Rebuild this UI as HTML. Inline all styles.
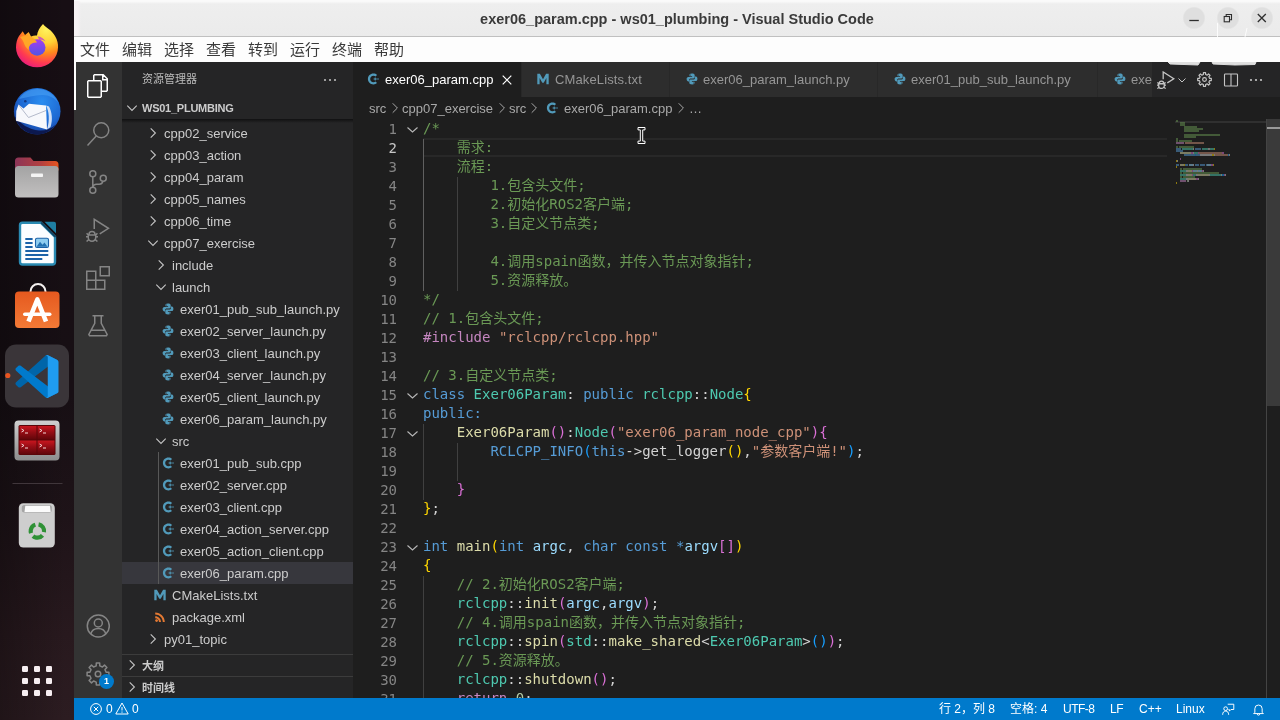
<!DOCTYPE html>
<html lang="zh-CN">
<head>
<meta charset="utf-8">
<title>exer06_param.cpp - ws01_plumbing - Visual Studio Code</title>
<style>
*{box-sizing:border-box;margin:0;padding:0}
html,body{width:1280px;height:720px;overflow:hidden;background:#1e1e1e}
body{position:relative;font-family:"Liberation Sans","Noto Sans CJK SC",sans-serif;font-size:13px;color:#ccc}
.abs{position:absolute}
#titlebar,#menubar,#sidebar,#editor,#status,#activity{will-change:transform}
/* dock */
#dock{left:0;top:0;width:74px;height:720px;background:linear-gradient(90deg,rgba(0,0,0,.28),rgba(0,0,0,0) 90%),linear-gradient(180deg,#170e14 0%,#170f14 55%,#1e1318 72%,#28191e 88%,#2c1c21 100%)}
/* title bar */
#titlebar{left:74px;top:0;width:1206px;height:37px;background:linear-gradient(90deg,#f7f3f5 0,#f5f1f3 4px,rgba(236,236,236,0) 7px),linear-gradient(180deg,#fbfbfb 0,#eeeeee 3px,#ebebeb 100%);border-top:1px solid #fafafa;border-bottom:1px solid #c0c0c0}
#title{left:0;top:0;width:1206px;height:37px;line-height:37px;text-align:center;color:#3a3a3a;font-weight:bold;font-size:14.5px}
#menubar{left:74px;top:37px;width:1206px;height:25px;background:#fdfdfd}
#menubar span{position:absolute;top:0;height:25px;line-height:25px;font-size:15px;color:#3a3a3a;white-space:nowrap}
/* vscode */
#activity{left:74px;top:62px;width:48px;height:636px;background:#333}
#sidebar{left:122px;top:62px;width:231px;height:636px;background:#252526}
#editor{left:353px;top:62px;width:927px;height:636px;background:#1e1e1e}
#status{left:74px;top:698px;width:1206px;height:22px;background:#007acc;color:#fff;font-size:12px}

/* editor */
#tabs{left:0;top:0;width:927px;height:35px;background:#252526}
.tab{position:absolute;top:0;height:35px;background:#2d2d2d;border-right:1px solid #282828;color:#969696;font-size:13px;line-height:35px;white-space:nowrap}
.tab.active{background:#1e1e1e;color:#fff}
.tab .lbl{position:absolute;top:0;left:32px}
#crumbs{left:0;top:35px;width:927px;height:22px;background:#1e1e1e;color:#a9a9a9;font-size:13px;line-height:22px;white-space:nowrap}
#crumbs span{position:absolute;top:1px}
#code{left:0;top:57px;width:927px;height:579px;overflow:hidden;font-family:"DejaVu Sans Mono","Noto Sans CJK SC",monospace;font-size:14px;line-height:19px;color:#d4d4d4}
.ln{position:relative;height:19px;padding-left:70px;white-space:pre}
.ln b{position:absolute;left:0;top:1px;width:44px;text-align:right;font-weight:normal;color:#858585}
.ln b.cur{color:#c6c6c6}
.ln i{font-style:normal}
.c{color:#6a9955}.k{color:#569cd6}.m{color:#c586c0}.s{color:#ce9178}.t{color:#4ec9b0}.f{color:#dcdcaa}.v{color:#9cdcfe}.n{color:#b5cea8}
.b1{color:#ffd700}.b2{color:#da70d6}.b3{color:#179fff}
.guide{position:absolute;width:1px;background:#404040}
.guide.act{background:#606060}
.fold{position:absolute;left:53px;width:12px;height:19px}
#curline{left:70px;top:19px;width:744px;height:19px;border-top:2px solid #282828;border-bottom:2px solid #282828}
#minimap{left:822px;top:57px;width:90px;height:579px}
#vscroll{left:913px;top:57px;width:14px;height:579px;border-left:1px solid #444}
#vslider{left:914px;top:57px;width:13px;height:287px;background:#3a3a3a}
#vmark{left:914px;top:65px;width:13px;height:2px;background:#9a9a9a}

/* sidebar */
#sbtitle{left:20px;top:0;height:35px;line-height:35px;font-size:11px;color:#bbb}
#sbmore{left:200px;top:10px;width:16px;height:16px}
#sbhead{left:0;top:35px;width:231px;height:22px;line-height:22px;font-weight:bold;font-size:11px;color:#ccc}
#sbhead .tt{position:absolute;left:20px;top:0;white-space:nowrap;letter-spacing:-.25px}
#sbshadow{left:0;top:57px;width:231px;height:4px;background:linear-gradient(180deg,rgba(0,0,0,.55),rgba(0,0,0,0))}
.row{position:absolute;left:0;width:231px;height:22px;line-height:22px;color:#ccc;font-size:13px;white-space:nowrap}
.row.sel{background:#37373d}
.row .ic{position:absolute;top:0;height:22px}
.row .nm{position:absolute;top:1px}
.tw{position:absolute;left:0;top:3px;width:16px;height:16px}
.fi{position:absolute;left:0;top:5px;width:12px;height:12px}
.sg{position:absolute;width:1px;background:#585858}
.pane{position:absolute;left:0;width:231px;height:22px;line-height:22px;border-top:1px solid #3c3c3c;font-weight:bold;font-size:11px;color:#ccc}
.pane .tt{position:absolute;left:20px;top:0}

/* activity bar */
#activity svg.ai{position:absolute;left:12px;width:24px;height:24px;fill:none;stroke:#858585;stroke-width:1.5}
#activity svg.ai.on{stroke:#fff}
#actind{left:0;top:0;width:2px;height:48px;background:#fff}
#badge{left:25px;top:612px;width:15px;height:15px;border-radius:8px;background:#007acc;color:#fff;font-size:9px;font-weight:bold;line-height:15px;text-align:center}

.tab .ti{position:absolute;left:14px;top:11px;width:12px;height:12px}
.tab .x{position:absolute;right:6px;top:10px;width:16px;height:16px}
#eactions{left:799px;top:0;width:128px;height:35px;background:#252526}
#crumbs svg.sep{position:absolute;top:3px;width:16px;height:16px}
#status span{position:absolute;top:0;height:22px;line-height:22px;white-space:nowrap}
#status svg{position:absolute}
.wbtn{position:absolute;top:5px;width:24px;height:24px;background:radial-gradient(circle,#dfdfdf 0,#dfdfdf 10px,rgba(223,223,223,0) 11.500px)}
</style>
</head>
<body>
<div id="dock" class="abs">
<svg class="abs" style="left:0;top:0" width="74" height="720" viewBox="0 0 74 720">
<defs>
<radialGradient id="ffg" cx="0.72" cy="0.12" r="1"><stop offset="0" stop-color="#fff45f"/><stop offset=".32" stop-color="#ffd034"/><stop offset=".55" stop-color="#ff8a1c"/><stop offset=".78" stop-color="#ff3b50"/><stop offset="1" stop-color="#e31587"/></radialGradient>
<linearGradient id="ffp" x1="0" y1="0" x2="0" y2="1"><stop offset="0" stop-color="#a63cf0"/><stop offset="1" stop-color="#4f55e3"/></linearGradient>
<radialGradient id="tbg" cx=".6" cy=".3" r=".85"><stop offset="0" stop-color="#2b8df0"/><stop offset=".55" stop-color="#1d68d2"/><stop offset="1" stop-color="#142a80"/></radialGradient>
<linearGradient id="fld" x1="0" x2="1"><stop offset="0" stop-color="#8c3558"/><stop offset=".6" stop-color="#b3403f"/><stop offset="1" stop-color="#e8551f"/></linearGradient>
<linearGradient id="fbody" x1="0" y1="0" x2="0" y2="1"><stop offset="0" stop-color="#a3a3a3"/><stop offset="1" stop-color="#c2c0c0"/></linearGradient>
<linearGradient id="sw" x1="0" y1="0" x2="0" y2="1"><stop offset="0" stop-color="#e5591f"/><stop offset="1" stop-color="#f37a36"/></linearGradient>
<linearGradient id="tm" x1="0" y1="0" x2="0" y2="1"><stop offset="0" stop-color="#cfcfcf"/><stop offset="1" stop-color="#8d8d8d"/></linearGradient>
<linearGradient id="tr" x1="0" y1="0" x2="0" y2="1"><stop offset="0" stop-color="#c9161f"/><stop offset=".45" stop-color="#960d15"/><stop offset="1" stop-color="#62060a"/></linearGradient>
</defs>
<!-- firefox -->
<g>
<path d="M43 24C46 28 52 30 55 36C57.500 40 58.200 44 58 47.500A21 19.800 0 0 1 16 47.500C16 43 17 39 19 36L22.700 31.300L25 35L28.700 32L31 36.500C33 35.500 35 35.200 37 35.500C37.500 31 40 27 43 24Z" fill="url(#ffg)"/>
<circle cx="37.200" cy="47.500" r="8.300" fill="url(#ffp)"/>
<path d="M20 37C24 35.500 29 35.500 32 37.500C34 38.800 36 40.500 37 42.500C34.500 42.300 32 43 30.500 44.500C29 46 28.500 48 28.800 50C26 48 24.500 45 23.500 42C22.500 40 21.500 38.500 20 37Z" fill="#ffa726"/>
<path d="M37.500 36.500C41 36.500 44 38.500 45.500 41.500C43.500 40 41 39.500 39 40C38.800 38.800 38.300 37.500 37.500 36.500Z" fill="#c23fd0" opacity=".8"/>
</g>
<!-- thunderbird -->
<g>
<circle cx="37.200" cy="111.200" r="23.300" fill="url(#tbg)"/>
<path d="M14.500 116C17 126 26 134.500 37.200 134.500C45 134.500 52 130.500 56 124.500C51 129 45 131 39 130.500C29 129.500 20 124 14.500 116Z" fill="#0a1040" opacity=".85"/>
<path d="M19 99C23 92.500 30 89 37.500 89C47 89 55 95 58.500 103C55 98 49 95 42.500 95C34 95 27 97.500 19 99Z" fill="#4aa3f5" opacity=".55"/>
<path d="M18.500 104.500L23.500 108.500L29 103.800L46 105.400L47 129.500L16 120.800L16.300 111Z" fill="#f7f8fc"/>
<path d="M18.800 105L28.500 117.500L46 110.500" fill="none" stroke="#b4bacb" stroke-width="1"/>
<path d="M46 105.400C49 111 50 120 47 129.500L50.500 127C53 120 52 112 49 106.500Z" fill="#cfdff6"/>
<circle cx="25.300" cy="101.300" r="1.300" fill="#143a86"/>
</g>
<!-- files -->
<g>
<path d="M15 161a3.500 3.500 0 0 1 3.500-3.500h12l3 3.500h21.500a3.500 3.500 0 0 1 3.500 3.500v6h-43.500z" fill="url(#fld)"/>
<rect x="15" y="166" width="43.500" height="31.500" rx="3.500" fill="url(#fbody)"/>
<rect x="31" y="173.500" width="12" height="3.500" rx=".8" fill="#f4f4f4"/>
</g>
<!-- writer -->
<g>
<path d="M22.500 222.800h18.500l14 14v25.200a2.500 2.500 0 0 1-2.500 2.500h-30a2.500 2.500 0 0 1-2.500-2.500v-36.700a2.500 2.500 0 0 1 2.500-2.500z" fill="#fbfdff" stroke="#2a8ab2" stroke-width="2.400"/>
<path d="M44.500 221.700h9.500a2 2 0 0 1 2 2v9.500z" fill="#1f7fa3"/>
<path d="M41 222.500l14.500 14.500" stroke="#0f3f5c" stroke-width="1.600"/>
<rect x="25.300" y="238" width="7.300" height="2" fill="#1b62a8"/><rect x="25.300" y="242" width="7.300" height="2" fill="#1b62a8"/><rect x="25.300" y="246" width="7.300" height="2" fill="#1b62a8"/>
<rect x="25.300" y="250" width="23" height="2" fill="#1b62a8"/><rect x="25.300" y="254" width="23" height="2" fill="#1b62a8"/><rect x="25.300" y="258" width="17" height="2" fill="#1b62a8"/>
<rect x="35.500" y="238.200" width="13" height="9.300" rx="1.500" fill="#8fcdf0" stroke="#1b62a8" stroke-width="1.100"/>
<path d="M36.500 246.800l3.500-5 2.500 3 2-2.200 3 4.200z" fill="#2472b2"/>
</g>
<!-- software -->
<g>
<path d="M30.500 292.500v-1a7.500 7.500 0 0 1 15 0v1" fill="none" stroke="#f3efee" stroke-width="2"/>
<rect x="15" y="291.500" width="44.500" height="36.500" rx="4" fill="url(#sw)"/>
<path d="M28.500 321.500 37.300 299.500 46 321.500" fill="none" stroke="#fff" stroke-width="4.600" stroke-linejoin="round"/>
<rect x="23" y="312.500" width="28.500" height="3.600" rx="1.800" fill="#fff"/>
</g>
<!-- vscode -->
<rect x="5" y="344.500" width="64" height="63" rx="11" fill="#3a3539"/>
<circle cx="7.800" cy="375.500" r="2.600" fill="#e95420"/>
<g transform="translate(15.500,355) scale(.43)">
<path d="M96.460 10.800 75.860.880C73.470-.270 70.620.210 68.750 2.080L1.300 63.580c-1.810 1.650-1.810 4.510 0 6.160l5.510 5.010c1.490 1.350 3.720 1.450 5.320.240L93.360 13.370c2.730-2.070 6.640-.120 6.640 3.300v-.240c0-2.400-1.380-4.590-3.540-5.630z" fill="#0065a9"/>
<path d="M96.460 89.200 75.860 99.120c-2.390 1.150-5.240.670-7.110-1.200L1.300 36.420c-1.810-1.650-1.810-4.510 0-6.160l5.510-5.010c1.490-1.350 3.720-1.450 5.320-.240L93.360 86.630c2.730 2.070 6.640.120 6.640-3.300v.240c0 2.400-1.380 4.590-3.540 5.630z" fill="#007acc"/>
<path d="M75.860 99.130c-2.390 1.150-5.240.660-7.110-1.210 2.310 2.310 6.250.670 6.250-2.590V4.670c0-3.260-3.940-4.890-6.250-2.590 1.870-1.870 4.720-2.360 7.110-1.210l20.600 9.910C98.620 11.820 100 14.010 100 16.410v67.180c0 2.400-1.380 4.590-3.540 5.630z" fill="#1f9cf0"/>
</g>
<!-- terminator -->
<g>
<rect x="14.500" y="420.500" width="45" height="40" rx="4" fill="url(#tm)"/>
<rect x="18.500" y="425" width="37" height="30" rx="1.500" fill="#5a0508"/>
<rect x="19.500" y="426" width="17" height="13.500" fill="url(#tr)"/><rect x="37.500" y="426" width="17" height="13.500" fill="url(#tr)"/>
<rect x="19.500" y="440.500" width="17" height="13.500" fill="url(#tr)"/><rect x="37.500" y="440.500" width="17" height="13.500" fill="url(#tr)"/>
<path d="M21.500 429l2.500 1.500-2.500 1.500M25 433h3M39.500 429l2.500 1.500-2.500 1.500M43 433h3M21.500 444l2.500 1.500-2.500 1.500M25 448h3M39.500 444l2.500 1.500-2.500 1.500M43 448h3" fill="none" stroke="#f3d6d6" stroke-width="1"/>
</g>
<rect x="12.500" y="483" width="50" height="1" fill="#40363b"/>
<!-- trash -->
<g>
<rect x="18.800" y="503.300" width="36" height="44.300" rx="4.500" fill="#cecece"/>
<rect x="21.800" y="505" width="30" height="7.500" rx="2.500" fill="#a4a4a4"/>
<path d="M24.500 512l.8-6.200h24.600l.8 6.200z" fill="#fbfbfb"/>
<circle cx="37.400" cy="531" r="6.700" fill="none" stroke="#2f9136" stroke-width="4.200" stroke-dasharray="10.500 3.530" transform="rotate(-80 37.400 531)"/>
</g>
<!-- grid -->
<g fill="#f6eef1">
<rect x="22" y="666" width="6" height="6" rx="1.200"/><rect x="34" y="666" width="6" height="6" rx="1.200"/><rect x="46" y="666" width="6" height="6" rx="1.200"/>
<rect x="22" y="678" width="6" height="6" rx="1.200"/><rect x="34" y="678" width="6" height="6" rx="1.200"/><rect x="46" y="678" width="6" height="6" rx="1.200"/>
<rect x="22" y="690" width="6" height="6" rx="1.200"/><rect x="34" y="690" width="6" height="6" rx="1.200"/><rect x="46" y="690" width="6" height="6" rx="1.200"/>
</g>
</svg>
</div>
<div id="titlebar" class="abs"><div id="title" class="abs">exer06_param.cpp - ws01_plumbing - Visual Studio Code</div>
<div class="wbtn" style="left:1108px"><svg width="24" height="24" viewBox="0 0 24 24"><path d="M7.300 14.500h9.500" stroke="#2e2e2e" stroke-width="1.300"/></svg></div>
<div class="wbtn" style="left:1142px"><svg width="24" height="24" viewBox="0 0 24 24" fill="none" stroke="#2e2e2e" stroke-width="1.100"><rect x="8.200" y="10.500" width="5.300" height="5.300"/><path d="M10.200 10.500v-2h5.300v5.300h-2"/></svg></div>
<div class="wbtn" style="left:1176px"><svg width="24" height="24" viewBox="0 0 24 24"><path d="M7.800 8 15.800 16M15.800 8 7.800 16" stroke="#2e2e2e" stroke-width="1.300"/></svg></div>
</div>
<div id="menubar" class="abs">
<span style="left:6px">文件</span><span style="left:48px">编辑</span><span style="left:90px">选择</span><span style="left:132px">查看</span><span style="left:174px">转到</span><span style="left:216px">运行</span><span style="left:258px">终端</span><span style="left:300px">帮助</span>
</div>
<div id="activity" class="abs">
<div id="actind" class="abs"></div>
<svg class="ai on" style="top:12px" viewBox="0 0 24 24"><path d="M7.750 6V1.500l.750-.750h8.700l4.050 4.050v11.700l-.750.750h-4.500M16.750 1v4.750h4.500M1.750 7.500l.750-.750h12l.750.750v15l-.750.750h-12l-.750-.750z"/></svg>
<svg class="ai" style="top:60px" viewBox="0 0 24 24"><circle cx="15.250" cy="8.250" r="7.500"/><path d="M10.200 13.900 1.500 23.400"/></svg>
<svg class="ai" style="top:108px" viewBox="0 0 24 24"><circle cx="6.800" cy="3.750" r="3"/><circle cx="6.800" cy="20.200" r="3"/><circle cx="17.250" cy="8.200" r="3"/><path d="M6.800 6.750v10.450M17 11.200c-.6 2-2 3-3.700 3h-2.800c-1.900 0-3.300 1.100-3.700 3"/></svg>
<svg class="ai" style="top:156px" viewBox="0 0 24 24"><path d="M8.250 11V1.300l14.200 9-8.700 5.500"/><path d="M2.250 17h7.500v2.500a3.750 3.750 0 0 1-7.500 0zM3 16.500a3 3 0 0 1 6 0M2.250 17 .6 15.200M9.750 17l1.650-1.800M0 18.750h2.250M9.750 18.750h2.250M2.700 21.500.6 23.500M9.300 21.500l2.100 2"/></svg>
<svg class="ai" style="top:204px" viewBox="0 0 24 24"><path d="M.750 5.250h9v9h9v9h-18zM.750 14.250h9v9M14.250.750h9v9h-9z"/></svg>
<svg class="ai" style="top:252px" viewBox="0 0 24 24"><path d="M6.500 1.750h11M8.750 1.750v7.500l-5.900 11.200.7 1.300h16.900l.7-1.300-5.900-11.200v-7.500M5.500 16.250h13"/></svg>
<svg class="ai" style="top:552px" viewBox="0 0 24 24"><circle cx="12.300" cy="12" r="11"/><circle cx="12.300" cy="9" r="4"/><path d="M4.800 20c1-4 4-5.500 7.500-5.500s6.500 1.500 7.500 5.500"/></svg>
<svg class="ai" style="top:600px" viewBox="0 0 24 24"><path d="M10.3 1.1 L13.7 1.1 L13.8 3.9 L16.4 5.0 L18.5 3.1 L20.9 5.5 L19.0 7.6 L20.1 10.2 L22.9 10.3 L22.9 13.7 L20.1 13.8 L19.0 16.4 L20.9 18.5 L18.5 20.9 L16.4 19.0 L13.8 20.1 L13.7 22.9 L10.3 22.9 L10.2 20.1 L7.6 19.0 L5.5 20.9 L3.1 18.5 L5.0 16.4 L3.9 13.8 L1.1 13.7 L1.1 10.3 L3.9 10.2 L5.0 7.6 L3.1 5.5 L5.5 3.1 L7.6 5.0 L10.2 3.9Z" stroke-linejoin="round"/><circle cx="12" cy="12" r="2.750"/></svg>
<div id="badge" class="abs">1</div>
</div>
<div id="sidebar" class="abs">
<svg width="0" height="0" style="position:absolute"><defs>
<g id="ipy"><path d="M5.9.6c-2.2 0-2.4.9-2.4 1.7v1h2.6v.6H2.3C1.200 3.900.6 4.900.6 6.100s.5 2.300 1.500 2.300h1v-1.300c0-1 .8-1.700 1.700-1.700h2.500c.8 0 1.400-.6 1.400-1.400V2.300C8.700 1.200 7.700.6 5.900.6zM4.600 1.500a.5.5 0 1 1 0 1 .5.500 0 0 1 0-1z" fill="#519aba"/><path d="M6.100 11.400c2.200 0 2.400-.9 2.400-1.700v-1H5.900v-.6h3.800c1.100 0 1.700-1 1.700-2.200s-.5-2.300-1.500-2.300h-1v1.300c0 1-.8 1.700-1.700 1.700H4.700c-.8 0-1.400.6-1.400 1.400v1.700c0 1.100 1 1.700 2.800 1.700zM7.400 10.500a.5.500 0 1 1 0-1 .5.500 0 0 1 0 1z" fill="#519aba"/></g>
<g id="icpp"><path d="M6.400.6C3.300.6.900 3 .900 6s2.400 5.400 5.500 5.400c1.500 0 2.700-.5 3.600-1.300L8.600 8.500c-.6.500-1.300.8-2.200.8C4.500 9.300 3.200 7.800 3.200 6s1.300-3.300 3.200-3.300c.9 0 1.600.3 2.200.8L10 1.900C9.100 1.100 7.900.6 6.400.6z" fill="#519aba"/><path d="M6.600 5.500h1.100V4.400h1v1.100h1.100v1H8.700v1.100h-1V6.500H6.600zM10.200 5.500h1.600v1h-1.600z" fill="#519aba"/></g>
<g id="icm"><path d="M.3.800h2.600L6 6.300 9.100.800h2.600v10.400H9.400V5L6.700 9.700H5.300L2.600 5v6.200H.3z" fill="#519aba"/></g>
<g id="ixml"><circle cx="2.600" cy="9.600" r="1.400" fill="#e37933"/><path d="M1.200 5.200c3.200 0 5.800 2.600 5.800 5.800H5C5 8.900 3.300 7.200 1.200 7.200z" fill="#e37933"/><path d="M1.200 1.400c5.300 0 9.600 4.300 9.600 9.600H8.800c0-4.200-3.400-7.600-7.600-7.600z" fill="#e37933"/></g>
</defs></svg>
<div id="sbtitle" class="abs">资源管理器</div>
<svg id="sbmore" class="abs" viewBox="0 0 16 16"><circle cx="3" cy="8" r="1" fill="#c5c5c5"/><circle cx="8" cy="8" r="1" fill="#c5c5c5"/><circle cx="13" cy="8" r="1" fill="#c5c5c5"/></svg>
<div id="sbhead" class="abs"><svg class="abs" style="left:2px;top:3px;width:16px;height:16px" viewBox="0 0 16 16"><path d="M3.300 5.700 8 10.400 12.700 5.700" fill="none" stroke="#c5c5c5" stroke-width="1.100"/></svg><span class="tt">WS01_PLUMBING</span></div>
<div class="row" style="top:60px"><span class="ic" style="left:23px"><svg class="tw" viewBox="0 0 16 16"><path d="M5.7 3.3 10.4 8 5.7 12.7" fill="none" stroke="#c5c5c5" stroke-width="1.1"/></svg></span><span class="nm" style="left:42px">cpp02_service</span></div>
<div class="row" style="top:82px"><span class="ic" style="left:23px"><svg class="tw" viewBox="0 0 16 16"><path d="M5.7 3.3 10.4 8 5.7 12.7" fill="none" stroke="#c5c5c5" stroke-width="1.1"/></svg></span><span class="nm" style="left:42px">cpp03_action</span></div>
<div class="row" style="top:104px"><span class="ic" style="left:23px"><svg class="tw" viewBox="0 0 16 16"><path d="M5.7 3.3 10.4 8 5.7 12.7" fill="none" stroke="#c5c5c5" stroke-width="1.1"/></svg></span><span class="nm" style="left:42px">cpp04_param</span></div>
<div class="row" style="top:126px"><span class="ic" style="left:23px"><svg class="tw" viewBox="0 0 16 16"><path d="M5.7 3.3 10.4 8 5.7 12.7" fill="none" stroke="#c5c5c5" stroke-width="1.1"/></svg></span><span class="nm" style="left:42px">cpp05_names</span></div>
<div class="row" style="top:148px"><span class="ic" style="left:23px"><svg class="tw" viewBox="0 0 16 16"><path d="M5.7 3.3 10.4 8 5.7 12.7" fill="none" stroke="#c5c5c5" stroke-width="1.1"/></svg></span><span class="nm" style="left:42px">cpp06_time</span></div>
<div class="row" style="top:170px"><span class="ic" style="left:23px"><svg class="tw" viewBox="0 0 16 16"><path d="M3.3 5.7 8 10.4 12.7 5.7" fill="none" stroke="#c5c5c5" stroke-width="1.1"/></svg></span><span class="nm" style="left:42px">cpp07_exercise</span></div>
<div class="row" style="top:192px"><span class="ic" style="left:31px"><svg class="tw" viewBox="0 0 16 16"><path d="M5.7 3.3 10.4 8 5.7 12.7" fill="none" stroke="#c5c5c5" stroke-width="1.1"/></svg></span><span class="nm" style="left:50px">include</span></div>
<div class="row" style="top:214px"><span class="ic" style="left:31px"><svg class="tw" viewBox="0 0 16 16"><path d="M3.3 5.7 8 10.4 12.7 5.7" fill="none" stroke="#c5c5c5" stroke-width="1.1"/></svg></span><span class="nm" style="left:50px">launch</span></div>
<div class="row" style="top:236px"><span class="ic" style="left:40px"><svg class="fi" viewBox="0 0 12 12"><use href="#ipy"/></svg></span><span class="nm" style="left:58px">exer01_pub_sub_launch.py</span></div>
<div class="row" style="top:258px"><span class="ic" style="left:40px"><svg class="fi" viewBox="0 0 12 12"><use href="#ipy"/></svg></span><span class="nm" style="left:58px">exer02_server_launch.py</span></div>
<div class="row" style="top:280px"><span class="ic" style="left:40px"><svg class="fi" viewBox="0 0 12 12"><use href="#ipy"/></svg></span><span class="nm" style="left:58px">exer03_client_launch.py</span></div>
<div class="row" style="top:302px"><span class="ic" style="left:40px"><svg class="fi" viewBox="0 0 12 12"><use href="#ipy"/></svg></span><span class="nm" style="left:58px">exer04_server_launch.py</span></div>
<div class="row" style="top:324px"><span class="ic" style="left:40px"><svg class="fi" viewBox="0 0 12 12"><use href="#ipy"/></svg></span><span class="nm" style="left:58px">exer05_client_launch.py</span></div>
<div class="row" style="top:346px"><span class="ic" style="left:40px"><svg class="fi" viewBox="0 0 12 12"><use href="#ipy"/></svg></span><span class="nm" style="left:58px">exer06_param_launch.py</span></div>
<div class="row" style="top:368px"><span class="ic" style="left:31px"><svg class="tw" viewBox="0 0 16 16"><path d="M3.3 5.7 8 10.4 12.7 5.7" fill="none" stroke="#c5c5c5" stroke-width="1.1"/></svg></span><span class="nm" style="left:50px">src</span></div>
<div class="row" style="top:390px"><span class="ic" style="left:40px"><svg class="fi" viewBox="0 0 12 12"><use href="#icpp"/></svg></span><span class="nm" style="left:58px">exer01_pub_sub.cpp</span></div>
<div class="row" style="top:412px"><span class="ic" style="left:40px"><svg class="fi" viewBox="0 0 12 12"><use href="#icpp"/></svg></span><span class="nm" style="left:58px">exer02_server.cpp</span></div>
<div class="row" style="top:434px"><span class="ic" style="left:40px"><svg class="fi" viewBox="0 0 12 12"><use href="#icpp"/></svg></span><span class="nm" style="left:58px">exer03_client.cpp</span></div>
<div class="row" style="top:456px"><span class="ic" style="left:40px"><svg class="fi" viewBox="0 0 12 12"><use href="#icpp"/></svg></span><span class="nm" style="left:58px">exer04_action_server.cpp</span></div>
<div class="row" style="top:478px"><span class="ic" style="left:40px"><svg class="fi" viewBox="0 0 12 12"><use href="#icpp"/></svg></span><span class="nm" style="left:58px">exer05_action_client.cpp</span></div>
<div class="row sel" style="top:500px"><span class="ic" style="left:40px"><svg class="fi" viewBox="0 0 12 12"><use href="#icpp"/></svg></span><span class="nm" style="left:58px">exer06_param.cpp</span></div>
<div class="row" style="top:522px"><span class="ic" style="left:32px"><svg class="fi" viewBox="0 0 12 12"><use href="#icm"/></svg></span><span class="nm" style="left:50px">CMakeLists.txt</span></div>
<div class="row" style="top:544px"><span class="ic" style="left:32px"><svg class="fi" viewBox="0 0 12 12"><use href="#ixml"/></svg></span><span class="nm" style="left:50px">package.xml</span></div>
<div class="row" style="top:566px"><span class="ic" style="left:23px"><svg class="tw" viewBox="0 0 16 16"><path d="M5.7 3.3 10.4 8 5.7 12.7" fill="none" stroke="#c5c5c5" stroke-width="1.1"/></svg></span><span class="nm" style="left:42px">py01_topic</span></div>

<div class="sg" style="left:36px;top:390px;height:132px"></div>
<div id="sbshadow" class="abs"></div>
<div class="pane" style="top:592px"><svg class="abs" style="left:2px;top:2px;width:16px;height:16px" viewBox="0 0 16 16"><path d="M5.700 3.300 10.400 8 5.700 12.700" fill="none" stroke="#c5c5c5" stroke-width="1.100"/></svg><span class="tt">大纲</span></div>
<div class="pane" style="top:614px"><svg class="abs" style="left:2px;top:2px;width:16px;height:16px" viewBox="0 0 16 16"><path d="M5.700 3.300 10.400 8 5.700 12.700" fill="none" stroke="#c5c5c5" stroke-width="1.100"/></svg><span class="tt">时间线</span></div>
</div>
<div id="editor" class="abs">
<div id="tabs" class="abs">
<div class="tab active" style="left:0;width:169px"><svg class="ti" viewBox="0 0 12 12"><use href="#icpp"/></svg><span class="lbl">exer06_param.cpp</span><svg class="x" viewBox="0 0 16 16"><path d="M3.700 3.700 12.300 12.300M12.300 3.700 3.700 12.300" stroke="#fff" stroke-width="1.200" fill="none"/></svg></div>
<div class="tab" style="left:169px;width:148px"><svg class="ti" style="left:15px" viewBox="0 0 12 12"><use href="#icm"/></svg><span class="lbl" style="left:33px;letter-spacing:.12px">CMakeLists.txt</span></div>
<div class="tab" style="left:317px;width:208px"><svg class="ti" style="left:16px" viewBox="0 0 12 12"><use href="#ipy"/></svg><span class="lbl" style="left:33px">exer06_param_launch.py</span></div>
<div class="tab" style="left:525px;width:220px"><svg class="ti" style="left:16px" viewBox="0 0 12 12"><use href="#ipy"/></svg><span class="lbl" style="left:33px">exer01_pub_sub_launch.py</span></div>
<div class="tab" style="left:745px;width:60px;overflow:hidden"><svg class="ti" style="left:16px" viewBox="0 0 12 12"><use href="#ipy"/></svg><span class="lbl" style="left:33px">exer02_server_launch.py</span></div>
<div id="eactions" class="abs">
<svg class="abs" style="left:5px;top:9px;width:18px;height:18px" viewBox="0 0 24 24" fill="none" stroke="#c5c5c5" stroke-width="1.700"><path d="M8.250 11V1.300l14.200 9-8.700 5.500"/><path d="M2.250 17h7.500v2.500a3.750 3.750 0 0 1-7.500 0zM3 16.500a3 3 0 0 1 6 0M2.250 17 .6 15.200M9.750 17l1.650-1.800M0 18.750h2.250M9.750 18.750h2.250M2.700 21.500.6 23.500M9.300 21.500l2.100 2"/></svg>
<svg class="abs" style="left:25px;top:13px;width:10px;height:10px" viewBox="0 0 10 10"><path d="M1.500 3.500 5 7 8.500 3.500" fill="none" stroke="#c5c5c5" stroke-width="1"/></svg>
<svg class="abs" style="left:45px;top:10px;width:15px;height:15px" viewBox="0 0 24 24" fill="none" stroke="#c5c5c5" stroke-width="1.900"><path d="M10.3 1.1 L13.7 1.1 L13.8 3.9 L16.4 5.0 L18.5 3.1 L20.9 5.5 L19.0 7.6 L20.1 10.2 L22.9 10.3 L22.9 13.7 L20.1 13.8 L19.0 16.4 L20.9 18.5 L18.5 20.9 L16.4 19.0 L13.8 20.1 L13.7 22.9 L10.3 22.9 L10.2 20.1 L7.6 19.0 L5.5 20.9 L3.1 18.5 L5.0 16.4 L3.9 13.8 L1.1 13.7 L1.1 10.3 L3.9 10.2 L5.0 7.6 L3.1 5.5 L5.5 3.1 L7.6 5.0 L10.2 3.9Z" stroke-linejoin="round"/><circle cx="12" cy="12" r="3"/></svg>
<svg class="abs" style="left:71px;top:10px;width:16px;height:16px" viewBox="0 0 16 16" fill="none" stroke="#c5c5c5" stroke-width="1.100"><rect x="1.500" y="2" width="13" height="12" rx=".8"/><path d="M8 2v12"/></svg>
<svg class="abs" style="left:96px;top:10px;width:16px;height:16px" viewBox="0 0 16 16"><circle cx="3" cy="8" r="1.100" fill="#c5c5c5"/><circle cx="8" cy="8" r="1.100" fill="#c5c5c5"/><circle cx="13" cy="8" r="1.100" fill="#c5c5c5"/></svg>
</div>
</div>
<div id="crumbs" class="abs"><span style="left:16px">src</span><svg class="sep" style="left:34px" viewBox="0 0 16 16"><path d="M5.700 3.300 10.400 8 5.700 12.700" fill="none" stroke="#a9a9a9" stroke-width="1"/></svg><span style="left:49px">cpp07_exercise</span><svg class="sep" style="left:141px" viewBox="0 0 16 16"><path d="M5.700 3.300 10.400 8 5.700 12.700" fill="none" stroke="#a9a9a9" stroke-width="1"/></svg><span style="left:156px">src</span><svg class="sep" style="left:173px" viewBox="0 0 16 16"><path d="M5.700 3.300 10.400 8 5.700 12.700" fill="none" stroke="#a9a9a9" stroke-width="1"/></svg><svg class="abs" style="left:193px;top:5px;width:12px;height:12px" viewBox="0 0 12 12"><use href="#icpp"/></svg><span style="left:211px">exer06_param.cpp</span><svg class="sep" style="left:320px" viewBox="0 0 16 16"><path d="M5.700 3.300 10.400 8 5.700 12.700" fill="none" stroke="#a9a9a9" stroke-width="1"/></svg><span style="left:336px">…</span></div>
<div id="code" class="abs">
<div id="curline" class="abs"></div>
<div class="guide act" style="left:70px;top:20px;height:152px"></div>
<div class="guide" style="left:104px;top:58px;height:114px"></div>
<div class="guide" style="left:70px;top:305px;height:76px"></div>
<div class="guide" style="left:104px;top:324px;height:38px"></div>
<div class="guide" style="left:70px;top:457px;height:140px"></div>
<svg class="fold" style="top:1px" viewBox="0 0 12 19"><path d="M1.500 7.500 6.500 12 11.500 7.500" fill="none" stroke="#b8b8b8" stroke-width="1.100"/></svg><svg class="fold" style="top:267px" viewBox="0 0 12 19"><path d="M1.500 7.500 6.500 12 11.500 7.500" fill="none" stroke="#b8b8b8" stroke-width="1.100"/></svg><svg class="fold" style="top:305px" viewBox="0 0 12 19"><path d="M1.500 7.500 6.500 12 11.500 7.500" fill="none" stroke="#b8b8b8" stroke-width="1.100"/></svg><svg class="fold" style="top:419px" viewBox="0 0 12 19"><path d="M1.500 7.500 6.500 12 11.500 7.500" fill="none" stroke="#b8b8b8" stroke-width="1.100"/></svg>
<div class="ln"><b>1</b><i class="c">/*</i></div>
<div class="ln"><b class="cur">2</b><i class="c">    需求:</i></div>
<div class="ln"><b>3</b><i class="c">    流程:</i></div>
<div class="ln"><b>4</b><i class="c">        1.包含头文件;</i></div>
<div class="ln"><b>5</b><i class="c">        2.初始化ROS2客户端;</i></div>
<div class="ln"><b>6</b><i class="c">        3.自定义节点类;</i></div>
<div class="ln"><b>7</b></div>
<div class="ln"><b>8</b><i class="c">        4.调用spain函数，并传入节点对象指针;</i></div>
<div class="ln"><b>9</b><i class="c">        5.资源释放。</i></div>
<div class="ln"><b>10</b><i class="c">*/</i></div>
<div class="ln"><b>11</b><i class="c">// 1.包含头文件;</i></div>
<div class="ln"><b>12</b><i class="m">#include</i> <i class="s">"rclcpp/rclcpp.hpp"</i></div>
<div class="ln"><b>13</b></div>
<div class="ln"><b>14</b><i class="c">// 3.自定义节点类;</i></div>
<div class="ln"><b>15</b><i class="k">class</i> <i class="t">Exer06Param</i>: <i class="k">public</i> <i class="t">rclcpp</i>::<i class="t">Node</i><i class="b1">{</i></div>
<div class="ln"><b>16</b><i class="k">public:</i></div>
<div class="ln"><b>17</b>    <i class="f">Exer06Param</i><i class="b2">()</i>:<i class="t">Node</i><i class="b2">(</i><i class="s">"exer06_param_node_cpp"</i><i class="b2">){</i></div>
<div class="ln"><b>18</b>        <i class="k">RCLCPP_INFO</i><i class="b3">(</i><i class="k">this</i>-&gt;get_logger<i class="b1">()</i>,<i class="s">"参数客户端!"</i><i class="b3">)</i>;</div>
<div class="ln"><b>19</b></div>
<div class="ln"><b>20</b>    <i class="b2">}</i></div>
<div class="ln"><b>21</b><i class="b1">}</i>;</div>
<div class="ln"><b>22</b></div>
<div class="ln"><b>23</b><i class="k">int</i> <i class="f">main</i><i class="b1">(</i><i class="k">int</i> <i class="v">argc</i>, <i class="k">char</i> <i class="k">const</i> <i class="k">*</i><i class="v">argv</i><i class="b2">[]</i><i class="b1">)</i></div>
<div class="ln"><b>24</b><i class="b1">{</i></div>
<div class="ln"><b>25</b>    <i class="c">// 2.初始化ROS2客户端;</i></div>
<div class="ln"><b>26</b>    <i class="t">rclcpp</i>::<i class="f">init</i><i class="b2">(</i><i class="v">argc</i>,<i class="v">argv</i><i class="b2">)</i>;</div>
<div class="ln"><b>27</b>    <i class="c">// 4.调用spain函数，并传入节点对象指针;</i></div>
<div class="ln"><b>28</b>    <i class="t">rclcpp</i>::<i class="f">spin</i><i class="b2">(</i><i class="t">std</i>::<i class="f">make_shared</i>&lt;<i class="t">Exer06Param</i>&gt;<i class="b3">()</i><i class="b2">)</i>;</div>
<div class="ln"><b>29</b>    <i class="c">// 5.资源释放。</i></div>
<div class="ln"><b>30</b>    <i class="t">rclcpp</i>::<i class="f">shutdown</i><i class="b2">()</i>;</div>
<div class="ln"><b>31</b>    <i class="m">return</i> <i class="n">0</i>;</div>

</div>
<div id="minimap" class="abs"><div class="abs" style="left:0;top:2px;width:91px;height:2px;background:#303030"></div><svg class="abs" style="left:1px;top:0" width="90" height="70" viewBox="0 0 90 70" opacity=".7"><rect x="0" y="1.3" width="2" height="1.400" fill="#6a9955"/><rect x="4" y="3.3" width="5" height="1.400" fill="#6a9955"/><rect x="4" y="5.3" width="5" height="1.400" fill="#6a9955"/><rect x="8" y="7.3" width="13" height="1.400" fill="#6a9955"/><rect x="8" y="9.3" width="19" height="1.400" fill="#6a9955"/><rect x="8" y="11.3" width="15" height="1.400" fill="#6a9955"/><rect x="8" y="15.3" width="36" height="1.400" fill="#6a9955"/><rect x="8" y="17.3" width="12" height="1.400" fill="#6a9955"/><rect x="0" y="19.3" width="2" height="1.400" fill="#6a9955"/><rect x="0" y="21.3" width="2" height="1.400" fill="#6a9955"/><rect x="3" y="21.3" width="13" height="1.400" fill="#6a9955"/><rect x="0" y="23.3" width="8" height="1.400" fill="#c586c0"/><rect x="9" y="23.3" width="19" height="1.400" fill="#ce9178"/><rect x="0" y="27.3" width="2" height="1.400" fill="#6a9955"/><rect x="3" y="27.3" width="15" height="1.400" fill="#6a9955"/><rect x="0" y="29.3" width="5" height="1.400" fill="#569cd6"/><rect x="6" y="29.3" width="11" height="1.400" fill="#4ec9b0"/><rect x="17" y="29.3" width="1" height="1.400" fill="#d4d4d4"/><rect x="19" y="29.3" width="6" height="1.400" fill="#569cd6"/><rect x="26" y="29.3" width="6" height="1.400" fill="#4ec9b0"/><rect x="32" y="29.3" width="2" height="1.400" fill="#d4d4d4"/><rect x="34" y="29.3" width="4" height="1.400" fill="#4ec9b0"/><rect x="38" y="29.3" width="1" height="1.400" fill="#ffd700"/><rect x="0" y="31.3" width="7" height="1.400" fill="#569cd6"/><rect x="4" y="33.3" width="11" height="1.400" fill="#dcdcaa"/><rect x="15" y="33.3" width="2" height="1.400" fill="#da70d6"/><rect x="17" y="33.3" width="1" height="1.400" fill="#d4d4d4"/><rect x="18" y="33.3" width="4" height="1.400" fill="#4ec9b0"/><rect x="22" y="33.3" width="1" height="1.400" fill="#da70d6"/><rect x="23" y="33.3" width="23" height="1.400" fill="#ce9178"/><rect x="46" y="33.3" width="2" height="1.400" fill="#da70d6"/><rect x="8" y="35.3" width="11" height="1.400" fill="#569cd6"/><rect x="19" y="35.3" width="1" height="1.400" fill="#179fff"/><rect x="20" y="35.3" width="4" height="1.400" fill="#569cd6"/><rect x="24" y="35.3" width="12" height="1.400" fill="#d4d4d4"/><rect x="36" y="35.3" width="2" height="1.400" fill="#ffd700"/><rect x="38" y="35.3" width="1" height="1.400" fill="#d4d4d4"/><rect x="39" y="35.3" width="13" height="1.400" fill="#ce9178"/><rect x="52" y="35.3" width="1" height="1.400" fill="#179fff"/><rect x="53" y="35.3" width="1" height="1.400" fill="#d4d4d4"/><rect x="4" y="39.3" width="1" height="1.400" fill="#da70d6"/><rect x="0" y="41.3" width="1" height="1.400" fill="#ffd700"/><rect x="1" y="41.3" width="1" height="1.400" fill="#d4d4d4"/><rect x="0" y="45.3" width="3" height="1.400" fill="#569cd6"/><rect x="4" y="45.3" width="4" height="1.400" fill="#dcdcaa"/><rect x="8" y="45.3" width="1" height="1.400" fill="#ffd700"/><rect x="9" y="45.3" width="3" height="1.400" fill="#569cd6"/><rect x="13" y="45.3" width="4" height="1.400" fill="#9cdcfe"/><rect x="17" y="45.3" width="1" height="1.400" fill="#d4d4d4"/><rect x="19" y="45.3" width="4" height="1.400" fill="#569cd6"/><rect x="24" y="45.3" width="5" height="1.400" fill="#569cd6"/><rect x="30" y="45.3" width="1" height="1.400" fill="#569cd6"/><rect x="31" y="45.3" width="4" height="1.400" fill="#9cdcfe"/><rect x="35" y="45.3" width="2" height="1.400" fill="#da70d6"/><rect x="37" y="45.3" width="1" height="1.400" fill="#ffd700"/><rect x="0" y="47.3" width="1" height="1.400" fill="#ffd700"/><rect x="4" y="49.3" width="2" height="1.400" fill="#6a9955"/><rect x="7" y="49.3" width="19" height="1.400" fill="#6a9955"/><rect x="4" y="51.3" width="6" height="1.400" fill="#4ec9b0"/><rect x="10" y="51.3" width="2" height="1.400" fill="#d4d4d4"/><rect x="12" y="51.3" width="4" height="1.400" fill="#dcdcaa"/><rect x="16" y="51.3" width="1" height="1.400" fill="#da70d6"/><rect x="17" y="51.3" width="4" height="1.400" fill="#9cdcfe"/><rect x="21" y="51.3" width="1" height="1.400" fill="#d4d4d4"/><rect x="22" y="51.3" width="4" height="1.400" fill="#9cdcfe"/><rect x="26" y="51.3" width="1" height="1.400" fill="#da70d6"/><rect x="27" y="51.3" width="1" height="1.400" fill="#d4d4d4"/><rect x="4" y="53.3" width="2" height="1.400" fill="#6a9955"/><rect x="7" y="53.3" width="36" height="1.400" fill="#6a9955"/><rect x="4" y="55.3" width="6" height="1.400" fill="#4ec9b0"/><rect x="10" y="55.3" width="2" height="1.400" fill="#d4d4d4"/><rect x="12" y="55.3" width="4" height="1.400" fill="#dcdcaa"/><rect x="16" y="55.3" width="1" height="1.400" fill="#da70d6"/><rect x="17" y="55.3" width="3" height="1.400" fill="#4ec9b0"/><rect x="20" y="55.3" width="2" height="1.400" fill="#d4d4d4"/><rect x="22" y="55.3" width="11" height="1.400" fill="#dcdcaa"/><rect x="33" y="55.3" width="1" height="1.400" fill="#d4d4d4"/><rect x="34" y="55.3" width="11" height="1.400" fill="#4ec9b0"/><rect x="45" y="55.3" width="1" height="1.400" fill="#d4d4d4"/><rect x="46" y="55.3" width="2" height="1.400" fill="#179fff"/><rect x="48" y="55.3" width="1" height="1.400" fill="#da70d6"/><rect x="49" y="55.3" width="1" height="1.400" fill="#d4d4d4"/><rect x="4" y="57.3" width="2" height="1.400" fill="#6a9955"/><rect x="7" y="57.3" width="12" height="1.400" fill="#6a9955"/><rect x="4" y="59.3" width="6" height="1.400" fill="#4ec9b0"/><rect x="10" y="59.3" width="2" height="1.400" fill="#d4d4d4"/><rect x="12" y="59.3" width="8" height="1.400" fill="#dcdcaa"/><rect x="20" y="59.3" width="2" height="1.400" fill="#da70d6"/><rect x="22" y="59.3" width="1" height="1.400" fill="#d4d4d4"/><rect x="4" y="61.3" width="6" height="1.400" fill="#c586c0"/><rect x="11" y="61.3" width="1" height="1.400" fill="#b5cea8"/><rect x="12" y="61.3" width="1" height="1.400" fill="#d4d4d4"/><rect x="0" y="63.3" width="1" height="1.400" fill="#ffd700"/></svg></div>
<div id="vscroll" class="abs"></div>
<div id="vslider" class="abs"></div>
<div id="vmark" class="abs"></div>
</div>
<div id="status" class="abs">
<svg style="left:16px;top:5px;width:12px;height:12px" viewBox="0 0 12 12" fill="none" stroke="#fff" stroke-width="1"><circle cx="6" cy="6" r="5.400"/><path d="M3.800 3.800 8.200 8.200M8.200 3.800 3.800 8.200"/></svg>
<span style="left:32px">0</span>
<svg style="left:41px;top:4px;width:14px;height:13px" viewBox="0 0 14 13" fill="none" stroke="#fff" stroke-width="1"><path d="M7 1 13.200 12H.8z" stroke-linejoin="round"/><path d="M7 5v3.500M7 9.500v1.200"/></svg>
<span style="left:58px">0</span>
<span style="left:865px">行 2，列 8</span>
<span style="left:936px">空格: 4</span>
<span style="left:989px;letter-spacing:-.5px">UTF-8</span>
<span style="left:1036px;letter-spacing:-.5px">LF</span>
<span style="left:1065px">C++</span>
<span style="left:1102px">Linux</span>
<svg style="left:1148px;top:5px;width:13px;height:13px" viewBox="0 0 16 16" fill="none" stroke="#fff" stroke-width="1.200"><path d="M7 1.500h7.500v6.500h-3.500l-2 2v-2h-1"/><circle cx="4.500" cy="7" r="2.300"/><path d="M.8 14.500c0-3 1.500-4.500 3.700-4.500s3.700 1.500 3.700 4.500"/></svg>
<svg style="left:1178px;top:5px;width:13px;height:13px" viewBox="0 0 16 16" fill="none" stroke="#fff" stroke-width="1.200"><path d="M3.500 11.500V7a4.500 4.500 0 0 1 9 0v4.500l1.500 1.500h-12zM6.500 13.500a1.500 1.500 0 0 0 3 0"/></svg>
</div>
<svg class="abs" style="left:637px;top:126px" width="9" height="19" viewBox="0 0 9 19"><path d="M1 1.500h7v2.400H5.700v11.200H8v2.400H1v-2.400h2.300V3.900H1z" fill="#1a1a1a" stroke="#fff" stroke-width="1"/></svg>
<svg class="abs" style="left:1150px;top:20px;opacity:.85" width="120" height="46" viewBox="0 0 120 46"><path d="M67.500 3v14M97 8l-2 9M18 42h32l-2 3-28-1zM62 42h44l-1 2.500-20 .5-22-1z" stroke="#fff" stroke-width="1" fill="#fff"/></svg>
</body>
</html>
